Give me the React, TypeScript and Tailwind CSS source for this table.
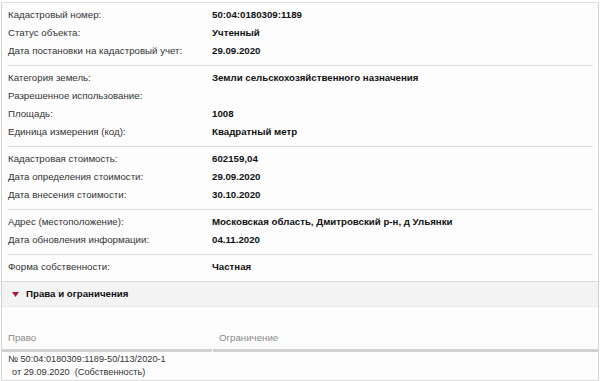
const groups: [string, string][][] = [
  [
    ['Кадастровый номер:', '50:04:0180309:1189'],
    ['Статус объекта:', 'Учтенный'],
    ['Дата постановки на кадастровый учет:', '29.09.2020'],
  ],
  [
    ['Категория земель:', 'Земли сельскохозяйственного назначения'],
    ['Разрешенное использование:', ''],
    ['Площадь:', '1008'],
    ['Единица измерения (код):', 'Квадратный метр'],
  ],
  [
    ['Кадастровая стоимость:', '602159,04'],
    ['Дата определения стоимости:', '29.09.2020'],
    ['Дата внесения стоимости:', '30.10.2020'],
  ],
  [
    ['Адрес (местоположение):', 'Московская область, Дмитровский р-н, д Ульянки'],
    ['Дата обновления информации:', '04.11.2020'],
  ],
  [['Форма собственности:', 'Частная']],
];

export default function App() {
  return (
    <div className="w-[600px] h-[381px] overflow-hidden bg-white font-['Liberation_Sans',Arial,sans-serif] text-[9.7px]">
      <div className="ml-[1px] w-[598px] h-full border-x border-[#d4d4d4] border-t border-t-[#e2e2e2] mt-[2px] bg-[#fdfdfd]">
        <div className="pl-[6px] pr-[5px]">
          {groups.map((g, gi) => (
            <div
              key={gi}
              className={`pt-[3px] pb-[5px] ${gi < groups.length - 1 ? 'border-b border-[#dcdcdc]' : ''}`}
            >
              {g.map(([label, value]) => (
                <div key={label} className="flex h-[18px] items-center">
                  <div className="w-[204px] text-[#333]">{label}</div>
                  <div className="font-bold text-[#111]">{value}</div>
                </div>
              ))}
            </div>
          ))}
        </div>

        {/* Права и ограничения */}
        <div className="flex h-[26px] items-center gap-[7px] border-y border-t-[#dadada] border-b-[#e8e8e8] bg-[#f3f3f3] pl-[10px]">
          <svg width="7" height="5" viewBox="0 0 7 5">
            <path d="M0 0h7L3.5 5z" fill="#a2213b" />
          </svg>
          <span className="font-bold text-[#111]">Права и ограничения</span>
        </div>

        <div className="mt-[22px] flex h-[17px] items-end text-[#8a8a8a]">
          <div className="w-[210px] pl-[6px]">Право</div>
          <div className="pl-[7px]">Ограничение</div>
        </div>
        <div className="mt-[3px] flex gap-[1px]">
          <div className="h-[3px] w-[210px] bg-[#d2d2d2]" />
          <div className="h-[3px] flex-1 bg-[#d2d2d2]" />
        </div>
        <div className="border-b border-[#dcdcdc] pl-[6px] pt-[1px] pb-[1px] text-[9.2px] leading-[13px] text-[#333]">
          <div>№ 50:04:0180309:1189-50/113/2020-1</div>
          <div className="pl-[4px]">от 29.09.2020&nbsp; (Собственность)</div>
        </div>
      </div>
    </div>
  );
}
